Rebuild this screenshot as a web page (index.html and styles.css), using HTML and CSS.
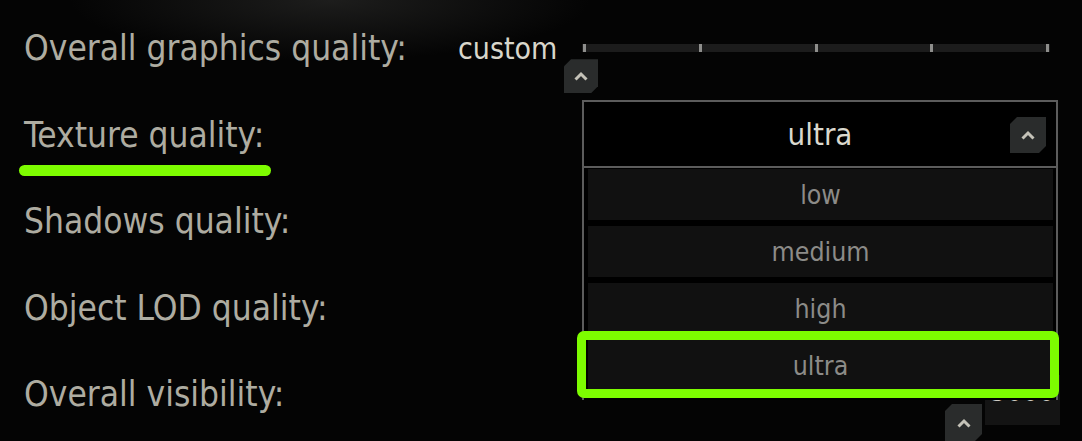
FILE: index.html
```html
<!DOCTYPE html>
<html>
<head>
<meta charset="utf-8">
<link rel="stylesheet" href="styles.css">
</head>
<body>
<div class="screen">
  <div class="settings">
    <div class="row">
      <span class="label">Overall graphics quality:</span>
      <div class="control">
        <span class="value">custom</span>
        <div class="slider">
          <div class="track">
            <i class="tick"></i><i class="tick"></i><i class="tick"></i><i class="tick"></i><i class="tick"></i>
          </div>
          <span class="chev-btn knob"><svg width="16" height="12" viewBox="0 0 16 12"><path d="M2.5 9.5 L8 4 L13.5 9.5" fill="none" stroke="#c4c2b8" stroke-width="3"/></svg></span>
        </div>
      </div>
    </div>
    <div class="row"><span class="label">Texture quality:</span></div>
    <div class="row"><span class="label">Shadows quality:</span></div>
    <div class="row"><span class="label">Object LOD quality:</span></div>
    <div class="row">
      <span class="label">Overall visibility:</span>
      <div class="vis-control">
        <span class="chev-btn vis-btn"><svg width="16" height="12" viewBox="0 0 16 12"><path d="M2.5 9.5 L8 4 L13.5 9.5" fill="none" stroke="#c4c2b8" stroke-width="3"/></svg></span>
        <span class="vis-value">5000</span>
      </div>
    </div>
  </div>

  <div class="dropdown">
    <div class="dd-head">
      <span class="dd-current">ultra</span>
      <span class="chev-btn dd-btn"><svg width="16" height="12" viewBox="0 0 16 12"><path d="M2.5 9.5 L8 4 L13.5 9.5" fill="none" stroke="#c4c2b8" stroke-width="3"/></svg></span>
    </div>
    <ul class="dd-list">
      <li class="dd-item">low</li>
      <li class="dd-item">medium</li>
      <li class="dd-item">high</li>
      <li class="dd-item">ultra</li>
    </ul>
  </div>

  <div class="underline"></div>
  <div class="highlight"></div>
</div>
</body>
</html>
```

FILE: styles.css
```css
* { box-sizing: border-box; }
html, body { margin: 0; padding: 0; background: #030303; }
.screen {
  position: relative;
  width: 1082px;
  height: 441px;
  overflow: hidden;
  background:
    radial-gradient(ellipse 260px 60px at 330px 0px, rgba(60,60,58,0.45), rgba(0,0,0,0) 100%),
    #040404;
  font-family: "DejaVu Sans Condensed", "DejaVu Sans", sans-serif;
}
.settings {
  display: flex;
  flex-direction: column;
  padding-top: 5px;
}
.row {
  height: 86.5px;
  display: flex;
  align-items: center;
  padding-left: 24px;
}
.label {
  flex: 0 0 434px;
  color: #aeaca1;
  font-size: 35px;
  white-space: nowrap;
}
.control {
  display: flex;
  align-items: center;
  width: 624px;
}
.value {
  flex: 0 0 124px;
  color: #d8d6cb;
  font-size: 30px;
}
.slider {
  position: relative;
  width: 468px;
}
.track {
  height: 8px;
  background: #1c1c1c;
  display: flex;
  justify-content: space-between;
  padding: 0 1px;
}
.tick {
  width: 3px;
  height: 8px;
  background: #8e8e8c;
}
.chev-btn {
  display: flex;
  align-items: center;
  justify-content: center;
  background: #2a2c2c;
  clip-path: polygon(7px 0, 100% 0, 100% calc(100% - 7px), calc(100% - 7px) 100%, 0 100%, 0 7px);
}
.knob {
  position: absolute;
  left: -18px;
  top: 15px;
  width: 34px;
  height: 34px;
}
.vis-control {
  margin-left: auto;
  margin-right: 22px;
  align-self: flex-start;
  margin-top: 24px;
  display: flex;
  align-items: flex-start;
  gap: 3px;
}
.vis-btn {
  margin-top: 29px;
  width: 37px;
  height: 37px;
}
.vis-value {
  width: 75px;
  height: 50px;
  background: #141414;
  color: #d0cec4;
  font-size: 28px;
  line-height: 34px;
  text-align: center;
}
.dropdown {
  position: absolute;
  left: 582px;
  top: 100px;
  width: 476px;
  height: 300px;
  border: 2px solid #5c5c5c;
  border-bottom: none;
  background: #000;
}
.dd-head {
  height: 66px;
  border-bottom: 2px solid #5c5c5c;
  display: flex;
  align-items: center;
  justify-content: center;
  position: relative;
}
.dd-current {
  color: #dad8ce;
  font-size: 31px;
}
.dd-btn {
  position: absolute;
  right: 10px;
  top: 15px;
  width: 36px;
  height: 36px;
}
.dd-list {
  list-style: none;
  margin: 0;
  padding: 1px 3px 0 4px;
  display: flex;
  flex-direction: column;
  gap: 6px;
}
.dd-item {
  height: 51px;
  background: #111111;
  color: #8c8b88;
  font-size: 26.5px;
  display: flex;
  align-items: center;
  justify-content: center;
}
.underline {
  position: absolute;
  left: 19px;
  top: 165px;
  width: 252px;
  height: 11px;
  border-radius: 6px;
  background: #7dfc00;
}
.highlight {
  position: absolute;
  left: 577px;
  top: 331px;
  width: 482px;
  height: 67px;
  border: 9px solid #7dfc00;
  border-radius: 7px;
}
```
